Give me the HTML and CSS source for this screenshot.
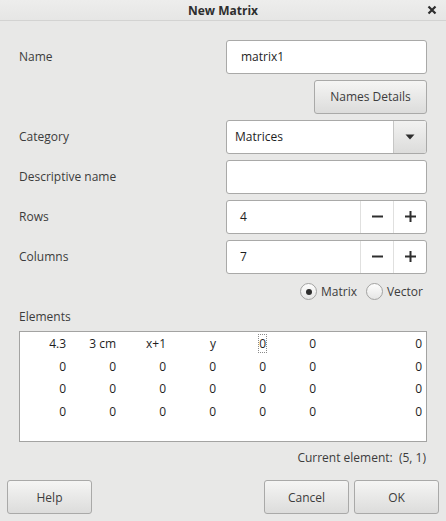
FILE: index.html
```html
<!DOCTYPE html>
<html>
<head>
<meta charset="utf-8">
<link rel="stylesheet" href="styles.css">
</head>
<body>
<div class="dialog">
  <div class="titlebar">
    <span class="title">New Matrix</span>
    <span class="close"><svg width="10" height="10" viewBox="0 0 10 10"><path d="M1.5 1.5 L8.5 8.5 M8.5 1.5 L1.5 8.5" stroke="#2e2e2e" stroke-width="2.2" stroke-linecap="butt"/></svg></span>
  </div>
  <div class="form">
    <div class="row">
      <span class="label">Name</span>
      <div class="entry"><span class="val">matrix1</span></div>
    </div>
    <div class="row end">
      <button class="btn details">Names Details</button>
    </div>
    <div class="row">
      <span class="label">Category</span>
      <div class="combo">
        <span class="val">Matrices</span>
        <span class="drop"><svg width="10" height="6" viewBox="0 0 10 6"><path d="M0.5 0.5 L9.5 0.5 L5 5.5 Z" fill="#2e2e2e"/></svg></span>
      </div>
    </div>
    <div class="row">
      <span class="label">Descriptive name</span>
      <div class="entry"></div>
    </div>
    <div class="row">
      <span class="label">Rows</span>
      <div class="spin">
        <span class="val">4</span>
        <span class="sbtn"><svg width="11" height="11" viewBox="0 0 11 11"><path d="M0 5.5 H11" stroke="#2e2e2e" stroke-width="2"/></svg></span>
        <span class="sbtn"><svg width="11" height="11" viewBox="0 0 11 11"><path d="M0 5.5 H11 M5.5 0 V11" stroke="#2e2e2e" stroke-width="2"/></svg></span>
      </div>
    </div>
    <div class="row">
      <span class="label">Columns</span>
      <div class="spin">
        <span class="val">7</span>
        <span class="sbtn"><svg width="11" height="11" viewBox="0 0 11 11"><path d="M0 5.5 H11" stroke="#2e2e2e" stroke-width="2"/></svg></span>
        <span class="sbtn"><svg width="11" height="11" viewBox="0 0 11 11"><path d="M0 5.5 H11 M5.5 0 V11" stroke="#2e2e2e" stroke-width="2"/></svg></span>
      </div>
    </div>
    <div class="radios">
      <span class="radio"><span class="circle on"></span>Matrix</span>
      <span class="radio"><span class="circle"></span>Vector</span>
    </div>
    <div class="elements-label">Elements</div>
    <div class="matrix">
      <span>4.3</span><span>3 cm</span><span>x+1</span><span>y</span><span><i class="focus">0</i></span><span>0</span><span>0</span>
      <span>0</span><span>0</span><span>0</span><span>0</span><span>0</span><span>0</span><span>0</span>
      <span>0</span><span>0</span><span>0</span><span>0</span><span>0</span><span>0</span><span>0</span>
      <span>0</span><span>0</span><span>0</span><span>0</span><span>0</span><span>0</span><span>0</span>
    </div>
    <div class="current">Current element:&nbsp; (5, 1)</div>
  </div>
  <div class="footer">
    <button class="btn action">Help</button>
    <div class="spacer"></div>
    <button class="btn action">Cancel</button>
    <button class="btn action">OK</button>
  </div>
</div>
</body>
</html>
```

FILE: styles.css
```css
html, body {
  margin: 0;
  padding: 0;
  background: #e8e8e7;
}
body {
  font-family: "Open Sans", "Noto Sans", sans-serif;
  font-size: 12px;
  color: #3c3c3c;
}
.dialog {
  width: 446px;
  height: 521px;
  display: flex;
  flex-direction: column;
}
.titlebar {
  height: 20px;
  border-bottom: 1px solid #d3d3d2;
  background: linear-gradient(#ededec, #e6e6e5);
  position: relative;
  display: flex;
  align-items: center;
  justify-content: center;
}
.title {
  font-weight: bold;
  color: #2e2e2e;
  font-size: 12px;
}
.close {
  position: absolute;
  right: 9px;
  top: 5px;
  width: 10px;
  height: 10px;
  display: flex;
}
.form {
  padding: 19px 19px 0 19px;
  display: flex;
  flex-direction: column;
}
.row {
  display: flex;
  align-items: center;
  justify-content: space-between;
  height: 33px;
  margin-bottom: 7px;
}
.row.end {
  justify-content: flex-end;
}
.label {
  color: #3c3c3c;
}
.entry, .combo, .spin {
  box-sizing: border-box;
  width: 201px;
  height: 34px;
  background: #fff;
  border: 1px solid #a9a9a8;
  border-radius: 3px;
  display: flex;
  align-items: center;
  color: #1e1e1e;
}
.entry .val {
  padding-left: 14px;
}
.combo .val, .spin .val {
  padding-left: 8px;
  flex: 1;
}
.spin .val {
  padding-left: 13px;
}
.drop {
  width: 33px;
  height: 100%;
  box-sizing: border-box;
  border-left: 1px solid #c6c6c5;
  background: linear-gradient(#f2f2f1, #dcdcdb);
  border-radius: 0 2px 2px 0;
  display: flex;
  align-items: center;
  justify-content: center;
}
.sbtn {
  width: 33px;
  height: 100%;
  box-sizing: border-box;
  border-left: 1px solid #e0e0df;
  display: flex;
  align-items: center;
  justify-content: center;
}
.btn {
  font-family: inherit;
  font-size: 12px;
  color: #3c3c3c;
  box-sizing: border-box;
  height: 34px;
  border: 1px solid #a9a9a8;
  border-radius: 3px;
  background: linear-gradient(#f5f5f4, #dcdcdb);
  padding: 0;
  margin: 0;
}
.details {
  width: 113px;
}
.radios {
  display: flex;
  justify-content: flex-end;
  gap: 9px;
  height: 17px;
  margin-top: 3px;
  padding-right: 4px;
}
.radio {
  display: flex;
  align-items: center;
  gap: 4px;
  color: #3c3c3c;
}
.circle {
  box-sizing: border-box;
  width: 17px;
  height: 17px;
  border-radius: 50%;
  border: 1px solid #a3a3a2;
  background: linear-gradient(#fdfdfd, #e6e6e5);
  display: flex;
  align-items: center;
  justify-content: center;
}
.circle.on::after {
  content: "";
  width: 6px;
  height: 6px;
  border-radius: 50%;
  background: #2e2e2e;
}
.elements-label {
  margin-top: 9px;
  height: 16px;
  line-height: 16px;
}
.matrix {
  box-sizing: border-box;
  margin-top: 6px;
  width: 408px;
  height: 111px;
  background: #fff;
  border: 1px solid #a3a3a2;
  display: grid;
  grid-template-columns: 46px repeat(5, 50px) 1fr;
  grid-auto-rows: 22.7px;
  padding: 1px 4px 0 0;
  align-content: start;
  color: #1e1e1e;
}
.matrix span {
  text-align: right;
  line-height: 22.7px;
}
.focus {
  font-style: normal;
  outline: 1px dotted #8a8a8a;
  outline-offset: 0;
}
.current {
  margin-top: 7px;
  text-align: right;
  padding-right: 1px;
  color: #3c3c3c;
}
.footer {
  margin-top: auto;
  display: flex;
  gap: 5px;
  padding: 0 7px 7px 7px;
}
.spacer {
  flex: 1;
}
.action {
  width: 85px;
}
```
